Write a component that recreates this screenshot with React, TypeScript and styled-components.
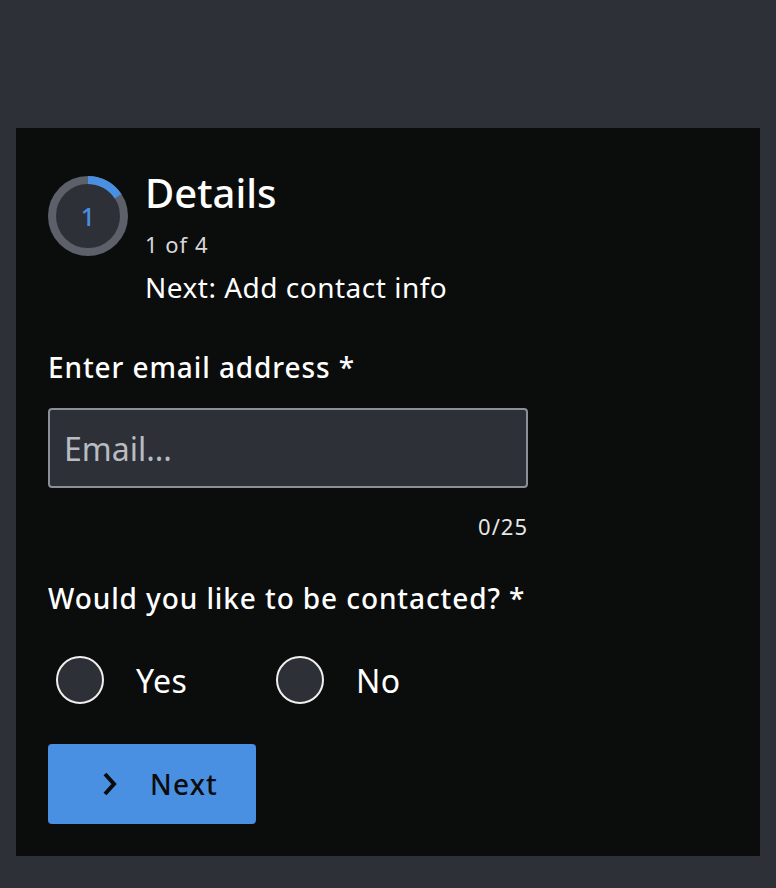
import React from "react";
import styled, { createGlobalStyle } from "styled-components";

const Global = createGlobalStyle`
  html, body { margin: 0; padding: 0; background: #2d3036; }
  body { font-family: "Noto Sans", "Open Sans", sans-serif; }
  * { box-sizing: border-box; }
`;

const Page = styled.div`
  width: 776px;
  min-height: 888px;
  padding: 128px 16px 32px 16px;
  background: #2d3036;
`;

const Panel = styled.div`
  background: #0b0c0c;
  padding: 48px 32px 32px 32px;
  display: flex;
  flex-direction: column;
  align-items: flex-start;
`;

const Header = styled.div`
  display: flex;
  gap: 17px;
  align-items: flex-start;
`;

const Ring = styled.div`
  width: 80px;
  height: 80px;
  position: relative;
  flex: none;
  svg { display: block; }
`;

const RingNum = styled.span`
  position: absolute;
  inset: 0;
  display: flex;
  align-items: center;
  justify-content: center;
  color: #4a90e2;
  font-size: 25px;
  font-weight: 500;
`;

const HeaderText = styled.div`
  display: flex;
  flex-direction: column;
  color: #fff;
`;

const Title = styled.h1`
  margin: -7px 0 0 0;
  font-size: 40px;
  font-weight: 500;
  line-height: 48px;
`;

const Step = styled.div`
  font-size: 22px;
  letter-spacing: 1px;
  color: #d8d8d8;
  line-height: 32px;
  margin-top: 11px;
`;

const NextStep = styled.div`
  font-size: 28px;
  letter-spacing: 0.5px;
  line-height: 36px;
  margin-top: 9px;
`;

const Label = styled.label<{ $mt: number }>`
  display: block;
  color: #fff;
  font-size: 28px;
  font-weight: 500;
  letter-spacing: 0.9px;
  line-height: 36px;
  margin-top: ${(p) => p.$mt}px;
`;

const Input = styled.input`
  display: block;
  width: 480px;
  height: 80px;
  margin-top: 23px;
  background: #2d3036;
  border: 2px solid #8b9098;
  border-radius: 4px;
  padding: 0 14px;
  font-family: inherit;
  font-size: 32px;
  color: #fff;
  outline: none;
  &::placeholder { color: #b8bcc3; }
`;

const Counter = styled.div`
  width: 480px;
  text-align: right;
  color: #e6e6e6;
  font-size: 22px;
  letter-spacing: 1px;
  line-height: 28px;
  margin-top: 24px;
`;

const RadioRow = styled.div`
  display: flex;
  margin-top: 40px;
`;

const RadioOption = styled.label`
  display: flex;
  align-items: center;
  width: 220px;
  height: 48px;
  padding-left: 8px;
  color: #fff;
  font-size: 32px;
  letter-spacing: 0.5px;
  cursor: pointer;
`;

const RadioCircle = styled.span`
  width: 48px;
  height: 48px;
  border-radius: 50%;
  border: 2px solid #f0f0f0;
  background: #2d3036;
  flex: none;
  margin-right: 32px;
`;

const Button = styled.button`
  display: flex;
  align-items: center;
  gap: 32px;
  width: 208px;
  height: 80px;
  margin-top: 40px;
  padding: 0 0 0 54px;
  background: #4a90e2;
  border: none;
  border-radius: 4px;
  color: #0b0c0c;
  font-family: inherit;
  font-size: 28px;
  font-weight: 500;
  letter-spacing: 1.2px;
  cursor: pointer;
  svg { display: block; flex: none; }
`;

function ProgressRing() {
  const r = 36;
  const c = 2 * Math.PI * r;
  const frac = 0.157;
  return (
    <Ring>
      <svg width="80" height="80" viewBox="0 0 80 80">
        <circle cx="40" cy="40" r="36" fill="#2d3036" stroke="#5c6068" strokeWidth="8" />
        <circle
          cx="40"
          cy="40"
          r="36"
          fill="none"
          stroke="#4a90e2"
          strokeWidth="8"
          strokeDasharray={`${c * frac} ${c}`}
          transform="rotate(-90 40 40)"
        />
      </svg>
      <RingNum>1</RingNum>
    </Ring>
  );
}

export default function App() {
  return (
    <Page>
      <Global />
      <Panel>
        <Header>
          <ProgressRing />
          <HeaderText>
            <Title>Details</Title>
            <Step>1 of 4</Step>
            <NextStep>Next: Add contact info</NextStep>
          </HeaderText>
        </Header>
        <Label $mt={44} htmlFor="email">Enter email address *</Label>
        <Input id="email" placeholder="Email..." />
        <Counter>0/25</Counter>
        <Label $mt={40}>Would you like to be contacted? *</Label>
        <RadioRow>
          <RadioOption>
            <RadioCircle />
            Yes
          </RadioOption>
          <RadioOption>
            <RadioCircle />
            No
          </RadioOption>
        </RadioRow>
        <Button>
          <svg width="16" height="24" viewBox="0 0 16 24">
            <path d="M3 2 L12 12 L3 22" fill="none" stroke="#0b0c0c" strokeWidth="4" />
          </svg>
          Next
        </Button>
      </Panel>
    </Page>
  );
}
